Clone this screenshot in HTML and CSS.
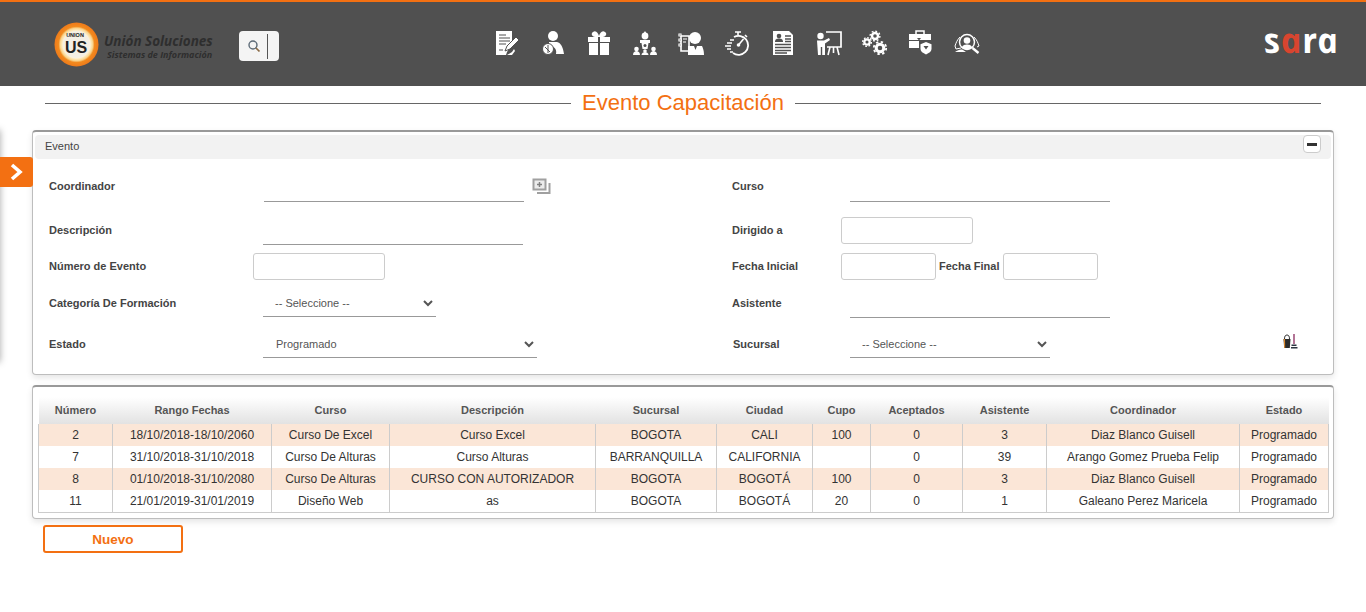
FILE: index.html
```html
<!DOCTYPE html>
<html lang="es">
<head>
<meta charset="utf-8">
<title>Evento Capacitación</title>
<link rel="stylesheet" href="styles.css">
</head>
<body>
<header class="topbar">
  <div class="brand">
    <svg class="brand-mark" viewBox="0 0 46 46" width="46" height="46">
      <defs>
        <radialGradient id="ring" cx="50%" cy="50%" r="50%">
          <stop offset="0.6" stop-color="#fff6df"/>
          <stop offset="0.74" stop-color="#f9d48c"/>
          <stop offset="0.82" stop-color="#f28a1e"/>
          <stop offset="1" stop-color="#ee7a1a"/>
        </radialGradient>
      </defs>
      <circle cx="22.500" cy="22.500" r="22" fill="url(#ring)"/>
      <circle cx="22.500" cy="22.500" r="13.500" fill="#f4efe4"/>
      <text x="21" y="15" class="mark-small">UNION</text>
      <text x="22" y="31" class="mark-big">US</text>
    </svg>
    <div class="brand-text">
      <div class="brand-name">Unión Soluciones</div>
      <div class="brand-sub">Sistemas de Información</div>
    </div>
  </div>
  <div class="search">
    <svg viewBox="0 0 14 14" width="14" height="14"><circle cx="6" cy="6" r="4" fill="none" stroke="#5d6b78" stroke-width="1.400"/><path d="M9 9l3.500 3.500" stroke="#8a6a45" stroke-width="1.700"/></svg>
    <span class="search-bar"></span>
  </div>
  <nav class="menu">
    <svg class="ico" viewBox="0 0 26 26"><path d="M2 1h16l0 13-5 8-1 3H2z" fill="#fff"/><path d="M5 5h7M5 8h11M5 11h11M5 14h7M5 20h4" stroke="#505050" stroke-width="1.200"/><path d="M11 21l2-5 9-9 3 3-9 9z" fill="#fff" stroke="#505050" stroke-width="1"/><path d="M13 25l5-3 2-3 1 2-3 4z" fill="#fff"/></svg>
    <svg class="ico" viewBox="0 0 26 26"><circle cx="13" cy="6" r="5" fill="#fff"/><path d="M9 12h8c4 1 6 5 7 12h-8c1-4-1-8-7-8z" fill="#fff"/><circle cx="8" cy="19" r="5.500" fill="#fff" stroke="#505050" stroke-width="1"/><path d="M5 17l5 5M8 15v8" stroke="#505050" stroke-width="1"/></svg>
    <svg class="ico" viewBox="0 0 26 26"><path d="M7 2c3-2 5 1 6 4 1-3 3-6 6-4 3 2 0 5-2 5H9C7 7 4 4 7 2z" fill="#fff"/><path d="M2 7h10v5H2zM14 7h10v5H14zM3 13h9v12H3zM14 13h9v12h-9z" fill="#fff"/></svg>
    <svg class="ico" viewBox="0 0 26 26"><circle cx="13" cy="6" r="3.400" fill="#fff"/><path d="M13 1l1.500 2.500h-3z" fill="#fff"/><path d="M8 10h10v3H8zM9.500 13h7l-1 6h-5z" fill="#fff"/><circle cx="13" cy="15.500" r="1.500" fill="#505050"/><circle cx="4.500" cy="19" r="2.300" fill="#fff"/><path d="M1 25c0-3 2-4 3.500-4S8 22 8 25z" fill="#fff"/><circle cx="13" cy="21" r="1.800" fill="#fff"/><path d="M9.500 25c0-2 2-3 3.500-3s3.500 1 3.500 3z" fill="#fff"/><circle cx="21.500" cy="19" r="2.300" fill="#fff"/><path d="M18 25c0-3 2-4 3.500-4s3.500 1 3.500 4z" fill="#fff"/></svg>
    <svg class="ico" viewBox="0 0 26 26"><circle cx="17" cy="8" r="6" fill="#fff"/><path d="M10 16h14c1 2 2 5 2 9H10z" fill="#fff"/><path d="M16 16l1.500 4 1.500-4z" fill="#505050"/><path d="M3 6h8v15H3z" fill="none" stroke="#fff" stroke-width="1.600"/><path d="M1 4h2v2H1zM1 9h2v2H1zM1 14h2v2H1zM5 9h4M5 12h3" stroke="#fff" stroke-width="1.200"/></svg>
    <svg class="ico" viewBox="0 0 26 26"><path d="M11 2h6M14 2v3M21 5l2 2" stroke="#fff" stroke-width="1.600" fill="none"/><path d="M10 7a9.500 9.500 0 1 1-1 16" fill="none" stroke="#fff" stroke-width="1.800"/><path d="M14.500 15l5-6" stroke="#fff" stroke-width="1.600"/><circle cx="14.500" cy="15" r="1.800" fill="#fff"/><path d="M6 10h4M3 13h5M1 16h6M3 19h4M6 22h3" stroke="#fff" stroke-width="1.300"/></svg>
    <svg class="ico" viewBox="0 0 26 26"><path d="M3 1h16l4 4v20H3z" fill="#fff"/><circle cx="9" cy="6" r="2.300" fill="#505050"/><path d="M5 12c0-3 2-3.500 4-3.500s4 .5 4 3.500z" fill="#505050"/><path d="M15 6h6M15 9h6M15 11.500h6M5 14.500h16M5 17.500h16M5 20.500h16M5 23h12" stroke="#505050" stroke-width="1.300"/></svg>
    <svg class="ico" viewBox="0 0 26 26"><circle cx="4.500" cy="6" r="3.200" fill="#fff"/><path d="M1 10.500h7l5-2.500 1 2-5 3.500V25H6.200v-8H4.800v8H2z" fill="#fff"/><path d="M10 2h15v15H11" fill="none" stroke="#fff" stroke-width="1.700"/><path d="M14 17l-2 8M21 17l2 8M17.500 17v6" stroke="#fff" stroke-width="1.600"/></svg>
    <svg class="ico" viewBox="0 0 26 26"><circle cx="5" cy="12" r="2.700" fill="none" stroke="#fff" stroke-width="2.300"/><circle cx="5" cy="12" r="4.400" fill="none" stroke="#fff" stroke-width="1.300" stroke-dasharray="1.700 1.700"/><circle cx="13" cy="6" r="3" fill="none" stroke="#fff" stroke-width="2.400"/><circle cx="13" cy="6" r="4.900" fill="none" stroke="#fff" stroke-width="1.400" stroke-dasharray="1.900 1.900"/><circle cx="18" cy="18" r="3.800" fill="none" stroke="#fff" stroke-width="3"/><circle cx="18" cy="18" r="6.200" fill="none" stroke="#fff" stroke-width="1.800" stroke-dasharray="2.400 2.470"/></svg>
    <svg class="ico" viewBox="0 0 26 26"><path d="M8 4V1h8v3" fill="none" stroke="#fff" stroke-width="1.500"/><path d="M1 4h22v6H1z" fill="#fff"/><path d="M1 11h10v3h3v4H1z" fill="#fff"/><path d="M9 8l2 2.500L13 8z" fill="#505050"/><path d="M18 10l7 3v6c0 3-3 5-7 7-4-2-7-4-7-7v-6z" fill="#505050"/><path d="M18 12l5.500 2.200v4.800c0 2.500-2.500 4-5.500 5.500-3-1.500-5.500-3-5.500-5.500v-4.800z" fill="#fff"/><path d="M15.500 16h5l-2.500 3.500z" fill="#505050"/></svg>
    <svg class="ico" viewBox="0 0 26 26"><g transform="translate(0 3)"><circle cx="13" cy="9" r="7.500" fill="none" stroke="#fff" stroke-width="1.500"/><circle cx="13" cy="7.500" r="3.300" fill="#fff"/><path d="M7.500 15c1-3 3.500-3.500 5.500-3.500s4.500.5 5.500 3.500l-5.500 2z" fill="#fff"/><path d="M6 4C3 7 2 10 1 13l1 3 5-1M20 4c3 3 4 6 5 9l-2 1" fill="none" stroke="#fff" stroke-width="1"/><path d="M18.500 15l6 5" stroke="#fff" stroke-width="2.400"/><path d="M1 19c3-2 6-3 8-2l3 2H3z" fill="#fff"/></g></svg>
  </nav>
  <div class="sara"><span>s</span><span class="sara-red">a</span><span>ra</span></div>
</header>

<aside class="drawer"></aside>
<div class="drawer-tab"><svg viewBox="0 0 14 18" width="14" height="18"><path d="M3 2l8 7-8 7" fill="none" stroke="#fff" stroke-width="3.600"/></svg></div>

<main class="content">
  <div class="page-title"><span class="rule"></span><h1>Evento Capacitación</h1><span class="rule"></span></div>

  <section class="panel">
    <div class="panel-head">
      <span class="panel-title">Evento</span>
      <button class="collapse" type="button" aria-label="Contraer"><span></span></button>
    </div>
    <form class="form">
      <div class="cell row-first">
        <label class="lbl">Coordinador</label>
        <input class="line w260 ml11" type="text">
        <svg class="add" viewBox="0 0 19 17" width="19" height="17"><path d="M1.500 1.500h12v10h-12z" fill="#ececec" stroke="#a0a0a0" stroke-width="2"/><path d="M7.500 4v5M5 6.500h5" stroke="#808080" stroke-width="1.500"/><path d="M17.500 5v10H5" fill="none" stroke="#a0a0a0" stroke-width="2"/></svg>
      </div>
      <div class="cell row-first">
        <label class="lbl-r">Curso</label>
        <input class="line w260 ml9" type="text">
      </div>

      <div class="cell">
        <label class="lbl">Descripción</label>
        <input class="line w260 ml10" type="text">
      </div>
      <div class="cell">
        <label class="lbl-r">Dirigido a</label>
        <input class="box w132" type="text">
      </div>

      <div class="cell">
        <label class="lbl">Número de Evento</label>
        <input class="box w132" type="text">
      </div>
      <div class="cell">
        <label class="lbl-r">Fecha Inicial</label>
        <input class="box w95" type="text">
        <label class="lbl-mid">Fecha Final</label>
        <input class="box w95" type="text">
      </div>

      <div class="cell">
        <label class="lbl">Categoría De Formación</label>
        <select class="sel sel-up sel-tight w173 ml10"><option>-- Seleccione --</option></select>
      </div>
      <div class="cell">
        <label class="lbl-r">Asistente</label>
        <input class="line w260 ml9" type="text">
      </div>

      <div class="cell row-last">
        <label class="lbl">Estado</label>
        <select class="sel w274 ml10"><option>Programado</option></select>
      </div>
      <div class="cell row-last">
        <label class="lbl-r lbl-shift">Sucursal</label>
        <select class="sel sel-tight w200 ml9"><option>-- Seleccione --</option></select>
        <svg class="broom" viewBox="0 0 15 15" width="15" height="15"><path d="M1.500 5c0-3 1-4 2.500-4s2.500 1 2.500 4" fill="none" stroke="#333" stroke-width="1"/><path d="M.5 5h7l-.7 9H1.200z" fill="#2b2b2b"/><path d="M.8 5h1.200l.2 9h-1z" fill="#e08a2b"/><path d="M11 0v10" stroke="#8a2a5e" stroke-width="1.300"/><path d="M8.500 10.500h5v1.500h-5zM8 13h6.500v1.500H8z" fill="#2b3440"/></svg>
      </div>
    </form>
  </section>

  <section class="panel panel-table">
    <table class="grid">
      <colgroup>
        <col class="c1"><col class="c2"><col class="c3"><col class="c4"><col class="c5"><col class="c6"><col class="c7"><col class="c8"><col class="c9"><col class="c10"><col class="c11">
      </colgroup>
      <thead>
        <tr><th>Número</th><th>Rango Fechas</th><th>Curso</th><th>Descripción</th><th>Sucursal</th><th>Ciudad</th><th>Cupo</th><th>Aceptados</th><th>Asistente</th><th>Coordinador</th><th>Estado</th></tr>
      </thead>
      <tbody>
        <tr><td>2</td><td>18/10/2018-18/10/2060</td><td>Curso De Excel</td><td>Curso Excel</td><td>BOGOTA</td><td>CALI</td><td>100</td><td>0</td><td>3</td><td>Diaz Blanco Guisell</td><td>Programado</td></tr>
        <tr><td>7</td><td>31/10/2018-31/10/2018</td><td>Curso De Alturas</td><td>Curso Alturas</td><td>BARRANQUILLA</td><td>CALIFORNIA</td><td></td><td>0</td><td>39</td><td>Arango Gomez Prueba Felip</td><td>Programado</td></tr>
        <tr><td>8</td><td>01/10/2018-31/10/2080</td><td>Curso De Alturas</td><td>CURSO CON AUTORIZADOR</td><td>BOGOTA</td><td>BOGOTÁ</td><td>100</td><td>0</td><td>3</td><td>Diaz Blanco Guisell</td><td>Programado</td></tr>
        <tr><td>11</td><td>21/01/2019-31/01/2019</td><td>Diseño Web</td><td>as</td><td>BOGOTA</td><td>BOGOTÁ</td><td>20</td><td>0</td><td>1</td><td>Galeano Perez Maricela</td><td>Programado</td></tr>
      </tbody>
    </table>
  </section>

  <button class="btn-new" type="button">Nuevo</button>
</main>
</body>
</html>
```
FILE: styles.css
```css
* { box-sizing: border-box; }
html, body { margin: 0; padding: 0; height: 612px; overflow: hidden; }
body { font-family: "Liberation Sans", Arial, sans-serif; background: #fff; color: #333; position: relative; }

.topbar { height: 86px; background: #505050; border-top: 2px solid #f37012; display: flex; align-items: center; padding: 0 28px 0 54px; }
.brand { width: 185px; display: flex; align-items: center; }
.brand-mark { flex: none; margin-right: 4px; position: relative; top: 1px; }
.mark-small { font: bold 5.500px "Liberation Sans", sans-serif; fill: #222; text-anchor: middle; }
.mark-big { font: bold 16px "Liberation Sans", sans-serif; fill: #222; text-anchor: middle; }
.brand-text { font-family: "Open Sans", sans-serif; font-style: italic; font-weight: 700; color: #2e2e2e; white-space: nowrap; position: relative; top: 2px; }
.brand-name { font-size: 13.500px; line-height: 16px; }
.brand-sub { font-size: 9px; line-height: 11px; margin-left: 3px; }

.search { width: 40px; height: 30px; background: #f4f4f4; border-radius: 4px; display: flex; align-items: center; padding-left: 8px; position: relative; top: 2px; }
.search-bar { width: 1px; height: 25px; background: #555; margin-left: 6px; }

.menu { display: flex; gap: 20px; margin-left: 215px; position: relative; top: -1px; }
.ico { width: 26px; height: 26px; display: block; }

.sara { margin-left: auto; font-family: "Open Sans", sans-serif; font-style: italic; font-size: 35px; line-height: 40px; font-weight: 700; color: #fff; letter-spacing: .5px; position: relative; top: -4px; transform: skewX(12deg); }
.sara-red { color: #d8452f; }

.drawer { position: absolute; left: -200px; top: 130px; width: 200px; height: 232px; box-shadow: 0 0 7px rgba(0,0,0,.35); }
.drawer-tab { position: absolute; left: 0; top: 157px; width: 33px; height: 30px; background: #f37012; border-radius: 0 3px 3px 0; display: flex; align-items: center; padding-left: 9px; z-index: 2; }

.content { padding: 0 32px; }
.page-title { height: 34px; margin: 0 13px 10px; display: flex; align-items: center; gap: 11px; }
.page-title h1 { margin: 0; font-size: 22px; font-weight: 400; color: #f37012; white-space: nowrap; }
.rule { flex: 1; height: 1px; background: #666; }

.panel { border: 1px solid #bdbdbd; border-top: 2px solid #999; border-radius: 4px; padding: 3px 2px 0; box-shadow: 0 3px 6px rgba(0,0,0,.1); background: #fff; }
.panel-head { height: 24px; background: #f2f2f2; border-radius: 4px; display: flex; align-items: center; justify-content: space-between; padding: 0 10px; font-size: 11px; color: #444; }
.panel-title { position: relative; top: -1px; }
.collapse { width: 18px; height: 18px; padding: 0; margin: -6px 0 0; background: #fff; border: 1px solid #ccc; border-radius: 4px; display: flex; align-items: center; justify-content: center; }
.collapse span { width: 10px; height: 3px; background: #333; }

.form { display: grid; grid-template-columns: 684px 1fr; grid-template-rows: 43px 43px 36px 37px 40px; align-items: end; padding: 0 33px 16px 13px; }
.cell { display: flex; align-items: center; height: 27px; }
.lbl, .lbl-r, .lbl-mid { font-size: 11px; font-weight: 700; color: #444; margin-bottom: 3px; white-space: nowrap; flex: none; }
.lbl { width: 205px; padding-left: 1px; }
.lbl-r { width: 109px; }
.lbl-shift { width: 108px; margin-left: 1px; }
.lbl-mid { margin: 0 3px 3px; }
.row-first .lbl, .row-first .lbl-r { margin-bottom: 5px; }
.row-last .lbl, .row-last .lbl-r { margin-bottom: 1px; }

.line { height: 27px; border: 0; border-bottom: 1px solid #999; background: transparent; outline: 0; }
.box { height: 27px; border: 1px solid #ccc; border-radius: 3px; background: #fff; outline: 0; margin-bottom: 2px; }
.sel { height: 27px; border: 0; border-bottom: 1px solid #999; background: #fff; font: 11px "Liberation Sans", sans-serif; color: #555; padding-left: 9px; outline: 0; }
.sel-up { margin-bottom: 2px; }
.sel-tight { padding-left: 8px; }
.w260 { width: 260px; } .w132 { width: 132px; } .w95 { width: 95px; }
.w173 { width: 173px; } .w274 { width: 274px; } .w200 { width: 200px; }
.ml9 { margin-left: 9px; } .ml10 { margin-left: 10px; } .ml11 { margin-left: 11px; }
.add { margin: 0 0 5px 8px; flex: none; }
.broom { margin-left: auto; margin-bottom: 6px; flex: none; }

.panel-table { margin-top: 10px; padding: 10px 4px 5px 5px; }
.grid { width: 1290px; table-layout: fixed; border-collapse: collapse; font-size: 12px; color: #333; }
.c1 { width: 74px; } .c2 { width: 159px; } .c3 { width: 118px; } .c4 { width: 206px; }
.c5 { width: 121px; } .c6 { width: 96px; } .c7 { width: 58px; } .c8 { width: 92px; }
.c9 { width: 84px; } .c10 { width: 193px; } .c11 { width: 89px; }
.grid th { height: 27px; padding: 0 0 2px; font-size: 11px; font-weight: 700; color: #555; text-align: center; background: linear-gradient(#fff, #e2e2e2); border: 0; }
.grid td { height: 22px; padding: 0; text-align: center; border-left: 1px solid #ccc; border-right: 1px solid #ccc; white-space: nowrap; overflow: hidden; }
.grid tbody tr:nth-child(odd) td { background: #fbe6d7; }
.grid tbody tr:last-child td { border-bottom: 1px solid #ccc; }

.btn-new { display: block; width: 140px; height: 28px; margin: 6px 0 0 11px; padding: 1px 0 0; background: #fff; border: 2px solid #f37012; border-radius: 3px; color: #f37012; font: bold 13.500px "Liberation Sans", sans-serif; }
```
